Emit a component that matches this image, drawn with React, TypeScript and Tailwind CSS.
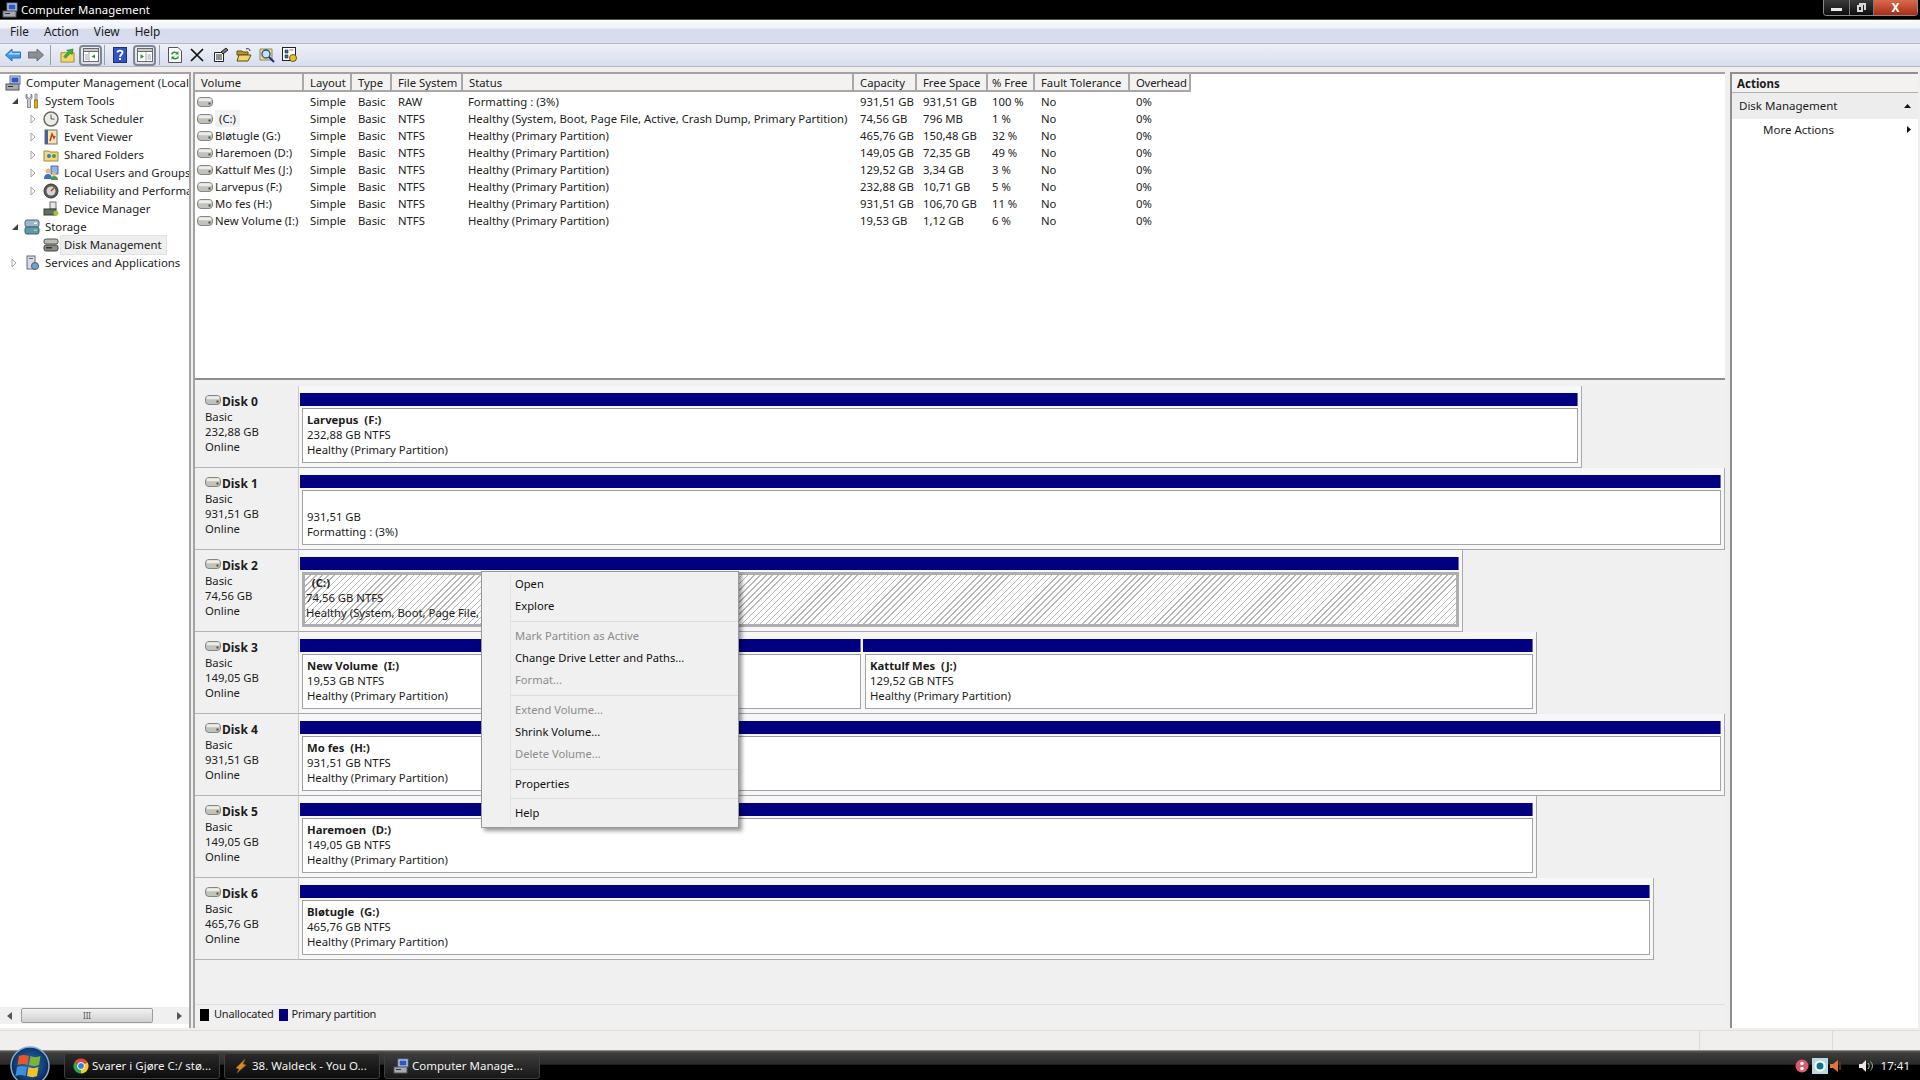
import React from 'react';

const font = 'font-["Noto_Sans","Open_Sans",sans-serif]';

const cols = 'grid grid-cols-[109px_48px_40px_71px_391px_63px_71px_47px_95px_61px] w-[996px]';

const volumes = [
  ['', 'Simple', 'Basic', 'RAW', 'Formatting : (3%)', '931,51 GB', '931,51 GB', '100 %', 'No', '0%'],
  ['(C:)', 'Simple', 'Basic', 'NTFS', 'Healthy (System, Boot, Page File, Active, Crash Dump, Primary Partition)', '74,56 GB', '796 MB', '1 %', 'No', '0%'],
  ['Bløtugle (G:)', 'Simple', 'Basic', 'NTFS', 'Healthy (Primary Partition)', '465,76 GB', '150,48 GB', '32 %', 'No', '0%'],
  ['Haremoen (D:)', 'Simple', 'Basic', 'NTFS', 'Healthy (Primary Partition)', '149,05 GB', '72,35 GB', '49 %', 'No', '0%'],
  ['Kattulf Mes (J:)', 'Simple', 'Basic', 'NTFS', 'Healthy (Primary Partition)', '129,52 GB', '3,34 GB', '3 %', 'No', '0%'],
  ['Larvepus (F:)', 'Simple', 'Basic', 'NTFS', 'Healthy (Primary Partition)', '232,88 GB', '10,71 GB', '5 %', 'No', '0%'],
  ['Mo fes (H:)', 'Simple', 'Basic', 'NTFS', 'Healthy (Primary Partition)', '931,51 GB', '106,70 GB', '11 %', 'No', '0%'],
  ['New Volume (I:)', 'Simple', 'Basic', 'NTFS', 'Healthy (Primary Partition)', '19,53 GB', '1,12 GB', '6 %', 'No', '0%'],
];

const headers = ['Volume', 'Layout', 'Type', 'File System', 'Status', 'Capacity', 'Free Space', '% Free', 'Fault Tolerance', 'Overhead'];

// status and % free sit a little left of the other columns
const cellPad = ['pl-[6px]', 'pl-[6px]', 'pl-[6px]', 'pl-[5px]', 'pl-[6px]', 'pl-[6px]', 'pl-[4px]', 'pl-[6px]', 'pl-[6px]'];

function Drive({ className = '' }: { className?: string }) {
  return (
    <svg viewBox="0 0 16 10" className={`w-4 h-[10px] shrink-0 ${className}`}>
      <rect x="0.5" y="0.5" width="15" height="9" rx="3.5" fill="#c2c2bd" stroke="#85867d" />
      <rect x="1.5" y="1.2" width="13" height="3" rx="1.5" fill="#ecece8" />
      <rect x="11.5" y="5.5" width="2" height="2" fill="#4a4a44" />
    </svg>
  );
}

function Expander({ open }: { open?: boolean }) {
  if (open) {
    return (
      <svg viewBox="0 0 8 8" className="w-2 h-2">
        <path d="M7 1v6H1z" fill="#404040" />
      </svg>
    );
  }
  return (
    <svg viewBox="0 0 6 10" className="w-[6px] h-[10px]">
      <path d="M1 1l4 4-4 4z" fill="#fff" stroke="#a6a6a6" />
    </svg>
  );
}

function TreeIcon({ kind }: { kind: string }) {
  const c = 'w-4 h-4 shrink-0';
  switch (kind) {
    case 'computer':
      return (
        <svg viewBox="0 0 16 16" className={c}>
          <rect x="5" y="1" width="10" height="8" fill="#dbe5f3" stroke="#5b6b86" />
          <rect x="6.5" y="2.5" width="7" height="5" fill="#2c57c8" />
          <rect x="1" y="9" width="13" height="6" fill="#a7acb3" stroke="#50565f" />
          <rect x="3" y="11" width="5" height="1" fill="#333" />
        </svg>
      );
    case 'tools':
      return (
        <svg viewBox="0 0 16 16" className={c}>
          <path d="M3 1v3l2 1.500L7 4V1l1 1v3L6.500 7v7.500h-3V7L2 5V2z" fill="#c9ccd1" stroke="#60646a" strokeWidth="0.700" />
          <path d="M11 1h2v6h-2z" fill="#e8e8e8" stroke="#60646a" strokeWidth="0.700" />
          <path d="M10.500 7h3v8h-3z" fill="#e2ad17" stroke="#7c5d07" strokeWidth="0.700" />
        </svg>
      );
    case 'clock':
      return (
        <svg viewBox="0 0 16 16" className={c}>
          <circle cx="8" cy="8" r="7" fill="#ecedea" stroke="#6b6a62" strokeWidth="1.500" />
          <path d="M8 3.500V8h3.500" fill="none" stroke="#57544a" />
        </svg>
      );
    case 'event':
      return (
        <svg viewBox="0 0 16 16" className={c}>
          <rect x="2" y="1" width="12" height="14" fill="#f6e7a8" stroke="#6b6f8c" />
          <rect x="2" y="1" width="3" height="14" fill="#4a5f9c" />
          <path d="M7 12l2-7 2 4 1-2" fill="none" stroke="#c8321f" strokeWidth="1.500" />
        </svg>
      );
    case 'shared':
      return (
        <svg viewBox="0 0 16 16" className={c}>
          <path d="M1 4h5l1 1h8v9H1z" fill="#f1d77e" stroke="#a18a3c" />
          <circle cx="6" cy="9" r="2" fill="#3b78c5" />
          <circle cx="11" cy="9" r="2" fill="#3fa14a" />
        </svg>
      );
    case 'users':
      return (
        <svg viewBox="0 0 16 16" className={c}>
          <path d="M8 1h7v8H8z" fill="#8fb3e8" stroke="#4a6ca6" />
          <circle cx="5" cy="6" r="2.500" fill="#e8b878" />
          <path d="M1 14c0-4 2-5 4-5s4 1 4 5z" fill="#3d6fc2" />
          <circle cx="11" cy="9" r="2" fill="#e8b878" />
          <path d="M8 15c0-3 1-4 3-4s4 1 4 4z" fill="#4a9a4e" />
        </svg>
      );
    case 'gauge':
      return (
        <svg viewBox="0 0 16 16" className={c}>
          <circle cx="8" cy="8" r="7" fill="#5b5b5b" stroke="#333" />
          <circle cx="8" cy="8" r="4.500" fill="#d5d5d5" />
          <path d="M8 8l3-3" stroke="#c8321f" strokeWidth="1.500" />
        </svg>
      );
    case 'device':
      return (
        <svg viewBox="0 0 16 16" className={c}>
          <rect x="7" y="1" width="6" height="7" fill="#e6e6e6" stroke="#6f6f6f" />
          <rect x="1" y="8" width="12" height="6" fill="#5f6f60" stroke="#3a3a3a" />
          <circle cx="13" cy="12" r="2.500" fill="#a7c234" />
        </svg>
      );
    case 'storage':
      return (
        <svg viewBox="0 0 16 16" className={c}>
          <rect x="1" y="1" width="14" height="7" rx="2" fill="#9fb7c9" stroke="#55697a" />
          <rect x="1" y="8" width="14" height="7" rx="2" fill="#5e9aae" stroke="#3d5f6d" />
          <rect x="10" y="3.500" width="3" height="1.500" fill="#fff" />
          <rect x="10" y="10.500" width="3" height="1.500" fill="#9be06c" />
        </svg>
      );
    case 'disk':
      return (
        <svg viewBox="0 0 16 16" className={c}>
          <rect x="1" y="2" width="14" height="5" rx="2" fill="#bdbdb8" stroke="#55554f" />
          <rect x="1" y="8" width="14" height="6" rx="2" fill="#8d8d88" stroke="#45453f" />
          <rect x="3" y="10" width="6" height="1.500" fill="#333" />
        </svg>
      );
    default:
      return (
        <svg viewBox="0 0 16 16" className={c}>
          <rect x="3" y="1" width="8" height="13" fill="#d9dde3" stroke="#646a74" />
          <rect x="5" y="3" width="4" height="1" fill="#646a74" />
          <circle cx="11" cy="11" r="3.500" fill="#7aa0c9" stroke="#3f5d80" />
        </svg>
      );
  }
}

function TreeRow({ label, icon, level, exp, active }: { label: string; icon: string; level: 0 | 1 | 2; exp?: 'open' | 'closed'; active?: boolean }) {
  const pad = level === 0 ? 'pl-[5px]' : level === 1 ? 'pl-[11px]' : 'pl-[30px]';
  return (
    <div className={`h-[18px] flex items-center whitespace-nowrap ${pad}`}>
      {level > 0 && (
        <span className="w-[13px] flex justify-start items-center shrink-0">
          {exp && <Expander open={exp === 'open'} />}
        </span>
      )}
      <TreeIcon kind={icon} />
      <span className={`ml-[2px] pl-[3px] pr-[4px] leading-[18px] ${active ? 'bg-[#eeeeee] outline outline-[#e2e2e2]' : ''}`}>{label}</span>
    </div>
  );
}

function ToolIcon({ kind }: { kind: string }) {
  switch (kind) {
    case 'back':
      return (
        <svg viewBox="0 0 16 14" className="w-4 h-[14px]">
          <path d="M0.500 7L7 1v3h8.500v6H7v3z" fill="#3d9be8" stroke="#2a6fb5" strokeLinejoin="round" />
          <path d="M3 6.500L7 3v2h8v1.500z" fill="#a6d8f8" />
        </svg>
      );
    case 'forward':
      return (
        <svg viewBox="0 0 16 14" className="w-4 h-[14px]">
          <path d="M15.500 7L9 1v3H0.500v6H9v3z" fill="#8b8f94" stroke="#6b6e72" strokeLinejoin="round" />
        </svg>
      );
    case 'up':
      return (
        <svg viewBox="0 0 16 16" className="w-[15px] h-[15px]">
          <path d="M1 5h14v10H1z" fill="#f0d66f" stroke="#a58a2c" />
          <path d="M14 1l-1 6-2-1.500L6 11 4 9l5-5-2-1.500z" fill="#3fae3f" stroke="#267a26" strokeWidth="0.600" />
        </svg>
      );
    case 'pane':
      return (
        <svg viewBox="0 0 16 14" className="w-4 h-[14px]">
          <rect x="0.500" y="0.500" width="15" height="13" fill="#fff" stroke="#6a6a6a" />
          <rect x="0.500" y="0.500" width="15" height="3" fill="#c9c9c9" stroke="#6a6a6a" />
          <path d="M6 4v9M2 7h3M2 9h3M2 11h3" stroke="#a5a5a5" />
          <path d="M12 6.500v4L8.500 8.500z" fill="#3e8a3e" />
        </svg>
      );
    case 'pane2':
      return (
        <svg viewBox="0 0 16 14" className="w-4 h-[14px]">
          <rect x="0.500" y="0.500" width="15" height="13" fill="#fff" stroke="#6a6a6a" />
          <rect x="0.500" y="0.500" width="15" height="3" fill="#c9c9c9" stroke="#6a6a6a" />
          <path d="M9 4v9M10.500 7h3.500M10.500 9h3.500M10.500 11h3.500" stroke="#a5a5a5" />
          <path d="M3.500 6v5L7 8.500z" fill="#3e8a3e" />
        </svg>
      );
    case 'help':
      return (
        <svg viewBox="0 0 14 16" className="w-[14px] h-4">
          <rect x="0.500" y="0.500" width="13" height="15" fill="#3155c4" stroke="#1d2f80" />
          <path d="M4.500 5.500C4.500 3 9.500 3 9.500 5.500 9.500 7.500 7 7.500 7 10" fill="none" stroke="#fff" strokeWidth="1.800" />
          <rect x="6" y="11" width="2" height="2" fill="#fff" />
        </svg>
      );
    case 'refresh':
      return (
        <svg viewBox="0 0 14 16" className="w-[14px] h-4">
          <path d="M0.500 0.500H10l3.500 3.500v11.500H0.500z" fill="#fff" stroke="#555" />
          <path d="M4 7.500C4 5 8 4.500 9.500 6.500M10 9.500C10 12 6 12.500 4.500 10.500" fill="none" stroke="#2b9a35" strokeWidth="1.600" />
          <path d="M10.500 4v3.500H7zM3.500 13V9.500H7z" fill="#2b9a35" />
        </svg>
      );
    case 'x':
      return (
        <svg viewBox="0 0 14 14" className="w-[14px] h-[14px]">
          <path d="M1 1l12 12M13 1L1 13" stroke="#111" strokeWidth="1.700" />
        </svg>
      );
    case 'props':
      return (
        <svg viewBox="0 0 16 16" className="w-4 h-4">
          <path d="M1.500 5.500h9v9h-9z" fill="#fff" stroke="#222" />
          <path d="M3 8h6M3 10h6M3 12h6" stroke="#222" />
          <path d="M8 5l5-4 2 2-5 4z" fill="#777" stroke="#222" />
        </svg>
      );
    case 'open':
      return (
        <svg viewBox="0 0 16 14" className="w-4 h-[14px]">
          <path d="M1 3h5l1 1h5v3H1z" fill="#b99a2c" stroke="#5e4d12" />
          <path d="M1 13l2-6h12l-3 6z" fill="#f1d66a" stroke="#5e4d12" />
          <path d="M10 1c2-1 4 0 4 2" fill="none" stroke="#222" />
        </svg>
      );
    case 'find':
      return (
        <svg viewBox="0 0 16 16" className="w-4 h-4">
          <path d="M1 2h12v11H1z" fill="#f3dd8a" stroke="#8a8a5a" />
          <circle cx="7" cy="7" r="4" fill="#bfe6f5" stroke="#2a4a9c" strokeWidth="1.300" />
          <path d="M10 10l5 5" stroke="#1d2f80" strokeWidth="2" />
        </svg>
      );
    default:
      return (
        <svg viewBox="0 0 16 16" className="w-4 h-4">
          <rect x="0.500" y="0.500" width="13" height="13" fill="#fff" stroke="#222" />
          <path d="M3 3h3v3H3zM7.500 3h4M3 8h3v3H3z" fill="#3b6fc2" stroke="#222" strokeWidth="0.600" />
          <circle cx="11" cy="11" r="3.500" fill="#e8c22c" stroke="#6a5a10" />
        </svg>
      );
  }
}

function Sep() {
  return <span className="w-px h-[20px] bg-[#9aa0aa] shrink-0" />;
}

function BoxBtn({ children }: { children: React.ReactNode }) {
  return (
    <span className="w-[23px] h-[21px] flex items-center justify-center border-2 border-[#7d8795] rounded-[4px] bg-[linear-gradient(#e9ebf2,#dcdfe8)] shrink-0">{children}</span>
  );
}

function Partition({ name, size, status, className = '', selected }: { name?: string; size: string; status: string; className?: string; selected?: boolean }) {
  return (
    <div className={`flex flex-col min-w-0 ${className}`}>
      <div className="h-[13px] bg-[#000080] border-r border-[#6a6ab0]" />
      <div className={`h-[55px] mt-[2px] ml-[2px] ${selected ? 'border-[3px] border-[#aeaeae]' : 'border border-[#a4a4a4] border-t-[#9c9c9c]'}`}>
        <div className={`h-full leading-[15px] flex flex-col overflow-hidden whitespace-pre ${selected ? 'bg-[repeating-linear-gradient(135deg,#ffffff_0px,#ffffff_3.3px,#b8b8b8_3.3px,#b8b8b8_4.3px)] pl-px' : 'bg-white pl-[4px] pt-[3px]'}`}>
          <span className="font-bold h-[15px]">{name}</span>
          <span className="h-[15px]">{size}</span>
          <span className="h-[15px]">{status}</span>
        </div>
      </div>
    </div>
  );
}

function DiskRow({ label, size, children }: { label: string; size: string; children: React.ReactNode }) {
  return (
    <div className="h-[82px] flex">
      <div className="w-[104px] shrink-0 bg-[#f1f0f0] border-r border-b border-[#b4b4b4] border-r-[#c9c9c9] pl-[10px] pt-[7px] leading-[15px]">
        <div className="flex items-center h-[17px] -mb-px">
          <Drive className="-mt-[3px] mr-px" />
          <span className="font-bold text-[12px]">{label}</span>
        </div>
        <div>Basic</div>
        <div>{size}</div>
        <div>Online</div>
      </div>
      <div className="h-full pl-px pr-[3px] pt-[7px] flex gap-[2px] bg-[#f7f7fa] border-r border-b border-[#a8a8a8]">{children}</div>
    </div>
  );
}

function MenuItem({ label, off }: { label: string; off?: boolean }) {
  return <div className={`h-[22px] pl-[33px] leading-[22px] ${off ? 'text-[#8c8c8c]' : 'text-[#111]'}`}>{label}</div>;
}

function MenuSep({ h }: { h: string }) {
  return (
    <div className={`flex items-center pl-[29px] ${h}`}>
      <div className="w-full h-px bg-[#dcdcdc]" />
    </div>
  );
}

function TaskButton({ label, active, children }: { label: string; active?: boolean; children: React.ReactNode }) {
  return (
    <div className={`w-[156px] h-[26px] flex items-center gap-[3px] pl-[8px] rounded-[3px] border border-[#3f3f3f] text-[11.5px] text-[#f1f1f1] whitespace-nowrap ${active ? 'bg-[linear-gradient(#3c3c3c,#181818)]' : 'bg-[linear-gradient(#2a2a2a,#0c0c0c)]'}`}>
      {children}
      <span>{label}</span>
    </div>
  );
}

export default function App() {
  return (
    <div className={`relative w-[1920px] h-[1080px] overflow-hidden flex flex-col bg-[#f1efee] text-[11.3px] text-[#1c1c1c] ${font}`}>
      {/* title bar */}
      <div className="h-[20px] bg-black flex items-center text-white text-[11.4px] shrink-0 border-b border-[#555]">
        <span className="ml-[2px] mr-[3px]"><TreeIcon kind="computer" /></span>
        <span>Computer Management</span>
        <div className="ml-auto mr-[2px] flex h-[16px] self-start border border-t-0 border-[#8a8a8a] rounded-b-[4px] overflow-hidden">
          <span className="w-[26px] flex items-center justify-center bg-[linear-gradient(#3b3b3b,#0d0d0d)] border-r border-[#777]"><span className="w-[11px] h-[3px] mt-[4px] bg-[#e8e8e8]" /></span>
          <span className="w-[24px] flex items-center justify-center bg-[linear-gradient(#3b3b3b,#0d0d0d)] border-r border-[#777]">
            <svg viewBox="0 0 11 11" className="w-[11px] h-[11px]"><path d="M3 1h7v7H8V3H3zM1 3h6v7H1zM3 5v3h2V5z" fill="#d8d8d8" fillRule="evenodd" /></svg>
          </span>
          <span className="w-[43px] flex items-center justify-center bg-[linear-gradient(#d96a4e,#a92d14)] text-white font-bold text-[12px] leading-none">X</span>
        </div>
      </div>

      {/* menu bar */}
      <div className="h-[24px] shrink-0 flex items-center gap-[15px] pl-[10px] text-[11.8px] bg-[linear-gradient(#fbfcfd_0%,#eef1f7_35%,#d6dcee_40%,#d8deef_100%)] border-b border-[#b5b9c4]">
        <span>File</span>
        <span>Action</span>
        <span>View</span>
        <span>Help</span>
      </div>

      {/* toolbar */}
      <div className="h-[23px] shrink-0 flex items-center pl-[5px] bg-[linear-gradient(#eef0f8,#d8deef)] border-b border-[#b5b9c4]">
        <ToolIcon kind="back" />
        <span className="w-[7px]" />
        <ToolIcon kind="forward" />
        <span className="w-[6px]" />
        <Sep />
        <span className="w-[9px]" />
        <ToolIcon kind="up" />
        <span className="w-[4px]" />
        <BoxBtn><ToolIcon kind="pane" /></BoxBtn>
        <span className="w-[2px]" />
        <Sep />
        <span className="w-[8px]" />
        <ToolIcon kind="help" />
        <span className="w-[6px]" />
        <BoxBtn><ToolIcon kind="pane2" /></BoxBtn>
        <span className="w-[3px]" />
        <Sep />
        <span className="w-[8px]" />
        <ToolIcon kind="refresh" />
        <span className="w-[8px]" />
        <ToolIcon kind="x" />
        <span className="w-[9px]" />
        <ToolIcon kind="props" />
        <span className="w-[7px]" />
        <ToolIcon kind="open" />
        <span className="w-[7px]" />
        <ToolIcon kind="find" />
        <span className="w-[7px]" />
        <ToolIcon kind="settings" />
      </div>

      {/* panes */}
      <div className="flex-1 min-h-0 flex pt-[5px] pb-[2px]">
        {/* tree */}
        <div className="w-[191px] shrink-0 bg-white border-r-2 border-t-2 border-[#a3a3a3] flex flex-col overflow-hidden">
          <div className="flex-1 overflow-hidden text-[11.4px]">
            <TreeRow level={0} icon="computer" label="Computer Management (Local" />
            <TreeRow level={1} icon="tools" exp="open" label="System Tools" />
            <TreeRow level={2} icon="clock" exp="closed" label="Task Scheduler" />
            <TreeRow level={2} icon="event" exp="closed" label="Event Viewer" />
            <TreeRow level={2} icon="shared" exp="closed" label="Shared Folders" />
            <TreeRow level={2} icon="users" exp="closed" label="Local Users and Groups" />
            <TreeRow level={2} icon="gauge" exp="closed" label="Reliability and Performa" />
            <TreeRow level={2} icon="device" label="Device Manager" />
            <TreeRow level={1} icon="storage" exp="open" label="Storage" />
            <TreeRow level={2} icon="disk" label="Disk Management" active />
            <TreeRow level={1} icon="services" exp="closed" label="Services and Applications" />
          </div>
          <div className="h-[17px] shrink-0 flex items-center bg-[#f0f0f0] mb-[4px]">
            <svg viewBox="0 0 5 8" className="w-[5px] h-2 ml-[7px]"><path d="M5 0v8L0 4z" fill="#555" /></svg>
            <div className="w-[132px] h-[15px] ml-[9px] border border-[#9c9c9c] rounded-[2px] bg-[linear-gradient(#f2f2f2,#d0d0d0)] flex items-center justify-center text-[8px] leading-none text-[#555]">III</div>
            <svg viewBox="0 0 5 8" className="w-[5px] h-2 ml-auto mr-[7px]"><path d="M0 0v8l5-4z" fill="#555" /></svg>
          </div>
        </div>

        {/* centre */}
        <div className="w-[1532px] ml-[2px] shrink-0 flex flex-col border-l-2 border-t-2 border-[#a3a3a3] overflow-hidden">
          <div className="h-[306px] shrink-0 bg-white border-b-2 border-[#8f8f8f] text-[#222] overflow-hidden">
            <div className={`${cols} h-[18px] leading-[18px] bg-[#f3f2f1]`}>
              {headers.map((h, i) => (
                <div key={h} className={`border-r-2 border-b-2 border-[#a8a8a8] whitespace-nowrap overflow-hidden ${i === 7 ? 'pl-[4px]' : 'pl-[6px]'} ${i === 9 ? 'tracking-[-0.2px]' : ''}`}>{h}</div>
              ))}
            </div>
            <div className="pt-[1px]">
              {volumes.map((v) => (
                <div key={v[0] || 'raw'} className={`${cols} h-[17px] leading-[17px] whitespace-nowrap`}>
                  <div className="flex items-center pl-[2px]">
                    <Drive className="mr-[2px]" />
                    {v[0] === '(C:)' ? <span className="bg-[#f0f1f2] px-[4px]">{v[0]}</span> : <span>{v[0]}</span>}
                  </div>
                  {v.slice(1).map((cell, i) => (
                    <div key={i} className={cellPad[i]}>{cell}</div>
                  ))}
                </div>
              ))}
            </div>
          </div>

          <div className="flex-1 min-h-0 bg-[#f0f0f0] pt-[6px] flex flex-col">
            <DiskRow label="Disk 0" size="232,88 GB">
              <Partition className="w-[1278px]" name="Larvepus  (F:)" size="232,88 GB NTFS" status="Healthy (Primary Partition)" />
            </DiskRow>
            <DiskRow label="Disk 1" size="931,51 GB">
              <Partition className="w-[1421px]" size="931,51 GB" status="Formatting : (3%)" />
            </DiskRow>
            <DiskRow label="Disk 2" size="74,56 GB">
              <Partition className="w-[1159px]" selected name="  (C:)" size="74,56 GB NTFS" status="Healthy (System, Boot, Page File, Active, Crash Dump, Primary Partition)" />
            </DiskRow>
            <DiskRow label="Disk 3" size="149,05 GB">
              <Partition className="w-[561px]" name="New Volume  (I:)" size="19,53 GB NTFS" status="Healthy (Primary Partition)" />
              <Partition className="w-[670px]" name="Kattulf Mes  (J:)" size="129,52 GB NTFS" status="Healthy (Primary Partition)" />
            </DiskRow>
            <DiskRow label="Disk 4" size="931,51 GB">
              <Partition className="w-[1421px]" name="Mo fes  (H:)" size="931,51 GB NTFS" status="Healthy (Primary Partition)" />
            </DiskRow>
            <DiskRow label="Disk 5" size="149,05 GB">
              <Partition className="w-[1233px]" name="Haremoen  (D:)" size="149,05 GB NTFS" status="Healthy (Primary Partition)" />
            </DiskRow>
            <DiskRow label="Disk 6" size="465,76 GB">
              <Partition className="w-[1350px]" name="Bløtugle  (G:)" size="465,76 GB NTFS" status="Healthy (Primary Partition)" />
            </DiskRow>
            <div className="flex-1" />
            <div className="h-[20px] mb-[4px] shrink-0 border-t border-[#dddddd] flex items-center pl-[5px] text-[11px] tracking-[-0.2px]">
              <span className="w-[9px] h-[12px] bg-black" />
              <span className="ml-[5px]">Unallocated</span>
              <span className="w-[9px] h-[12px] bg-[#000080] ml-[5px]" />
              <span className="ml-[4px]">Primary partition</span>
            </div>
          </div>
        </div>

        {/* actions */}
        <div className="w-[188px] ml-[5px] shrink-0 bg-white border-l-2 border-t-2 border-[#8f8f8f] text-[11.5px] flex flex-col">
          <div className="h-[19px] bg-[#f3f2f1] border-b border-[#b0b0b0] pl-[5px] font-bold leading-[20px]">Actions</div>
          <div className="h-[26px] bg-[#ededed] flex items-center pl-[7px] pr-[7px] justify-between">
            <span>Disk Management</span>
            <svg viewBox="0 0 7 4" className="w-[7px] h-1"><path d="M3.500 0L7 4H0z" fill="#111" /></svg>
          </div>
          <div className="h-[21px] flex items-center pl-[31px] pr-[7px] justify-between">
            <span>More Actions</span>
            <svg viewBox="0 0 4 7" className="w-1 h-[7px]"><path d="M0 0l4 3.500L0 7z" fill="#111" /></svg>
          </div>
        </div>
      </div>

      {/* status strip */}
      <div className="h-[20px] shrink-0 flex bg-[#f1efee] border-t border-[#dedcdb]">
        <div className="w-[1700px] border-r border-[#dcdad9]" />
        <div className="w-[133px] border-r border-[#dcdad9]" />
      </div>

      {/* taskbar */}
      <div className="h-[30px] shrink-0 flex items-center bg-[linear-gradient(#5a5a5a_0%,#3c3c3c_8%,#2a2a2a_45%,#000_50%,#000_100%)] border-t border-[#8c8c8c]">
        <div className="w-[64px] shrink-0" />
        <div className="flex gap-[4px] mt-px">
          <TaskButton label="Svarer i Gjøre C:/ stø...">
            <svg viewBox="0 0 16 16" className="w-4 h-4 shrink-0">
              <path d="M8 8L1.500 4.250A7.500 7.500 0 0 1 14.500 4.250z" fill="#de4b3a" />
              <path d="M8 8L14.500 4.250A7.500 7.500 0 0 1 8 15.500z" fill="#fbc82b" />
              <path d="M8 8L8 15.500A7.500 7.500 0 0 1 1.500 4.250z" fill="#2ea84a" />
              <circle cx="8" cy="8" r="3.500" fill="#3f7ce0" stroke="#fff" />
            </svg>
          </TaskButton>
          <TaskButton label="38. Waldeck - You O...">
            <svg viewBox="0 0 16 16" className="w-4 h-4 shrink-0">
              <path d="M12 1L3 10l3 1-2 4 9-8-3-1z" fill="#d98a28" stroke="#8a5a1a" strokeWidth="0.600" />
            </svg>
          </TaskButton>
          <TaskButton label="Computer Manage..." active>
            <TreeIcon kind="computer" />
          </TaskButton>
        </div>
        <div className="ml-auto flex items-center text-[11.5px] text-[#f2f2f2] mr-[10px]">
          <svg viewBox="0 0 14 14" className="w-[14px] h-[14px]">
            <circle cx="7" cy="7" r="6.500" fill="#d95c6e" />
            <circle cx="7" cy="4.500" r="1.800" fill="#fff" />
            <circle cx="7" cy="9.500" r="1.800" fill="#fff" />
          </svg>
          <svg viewBox="0 0 16 16" className="w-4 h-4 ml-[3px]">
            <rect width="16" height="16" fill="#b7dbe0" />
            <circle cx="8" cy="8" r="5.500" fill="#fff" />
            <circle cx="8" cy="8" r="3.500" fill="#12708a" />
          </svg>
          <svg viewBox="0 0 14 14" className="w-[14px] h-[14px] ml-[1px]">
            <path d="M1 5h3l5-4v12L4 9H1z" fill="#e0773a" />
            <path d="M11 3v8" stroke="#6a3a20" strokeWidth="1.500" />
          </svg>
          <svg viewBox="0 0 16 14" className="w-4 h-[14px] ml-[15px]">
            <path d="M1 5h3l4-4v12L4 9H1z" fill="#e8e8e8" />
            <path d="M10 4c1.500 1.500 1.500 4.500 0 6M12.500 2.500c2.500 2.500 2.500 6.500 0 9" fill="none" stroke="#9bd0a0" />
          </svg>
          <span className="ml-[7px]">17:41</span>
        </div>
      </div>

      {/* start orb */}
      <div className="absolute left-[10px] bottom-0 w-[40px] h-[34px] overflow-hidden">
        <svg viewBox="0 0 40 40" className="w-[40px] h-[40px]">
          <defs>
            <radialGradient id="orb" cx="50%" cy="45%" r="55%">
              <stop offset="0%" stopColor="#2f6aa8" />
              <stop offset="70%" stopColor="#123f78" />
              <stop offset="100%" stopColor="#0a2246" />
            </radialGradient>
          </defs>
          <circle cx="20" cy="20" r="19" fill="url(#orb)" stroke="#86acd0" strokeWidth="1.500" />
          <path d="M9 10c3-1.500 6-1.500 10 0l-1.500 9c-3-1.500-6-1.500-10 0z" fill="#e8552c" />
          <path d="M20.500 10c3 1.500 6 1.500 10 0L29 19c-3 1.500-6 1.500-10 0z" fill="#7ab53b" />
          <path d="M7 21c3-1.500 6-1.500 10 0l-1.500 9c-3-1.500-6-1.500-10 0z" fill="#3b8fdc" />
          <path d="M18.500 21c3 1.500 6 1.500 10 0L27 30c-3 1.500-6 1.500-10 0z" fill="#f2c22c" />
        </svg>
      </div>

      {/* context menu */}
      <div className="absolute left-[481px] top-[571px] w-[258px] h-[257px] bg-[#f0f0f0] border border-[#9a9a9a] shadow-[3px_3px_4px_rgba(0,0,0,0.4)] py-[1px] text-[11.2px]">
        <div className="absolute left-[28px] top-[2px] bottom-[2px] w-px bg-[#e3e3e3]" />
        <MenuItem label="Open" />
        <MenuItem label="Explore" />
        <MenuSep h="h-[8px]" />
        <MenuItem label="Mark Partition as Active" off />
        <MenuItem label="Change Drive Letter and Paths..." />
        <MenuItem label="Format..." off />
        <MenuSep h="h-[8px]" />
        <MenuItem label="Extend Volume..." off />
        <MenuItem label="Shrink Volume..." />
        <MenuItem label="Delete Volume..." off />
        <MenuSep h="h-[8px]" />
        <MenuItem label="Properties" />
        <MenuSep h="h-[7px]" />
        <MenuItem label="Help" />
      </div>
    </div>
  );
}
